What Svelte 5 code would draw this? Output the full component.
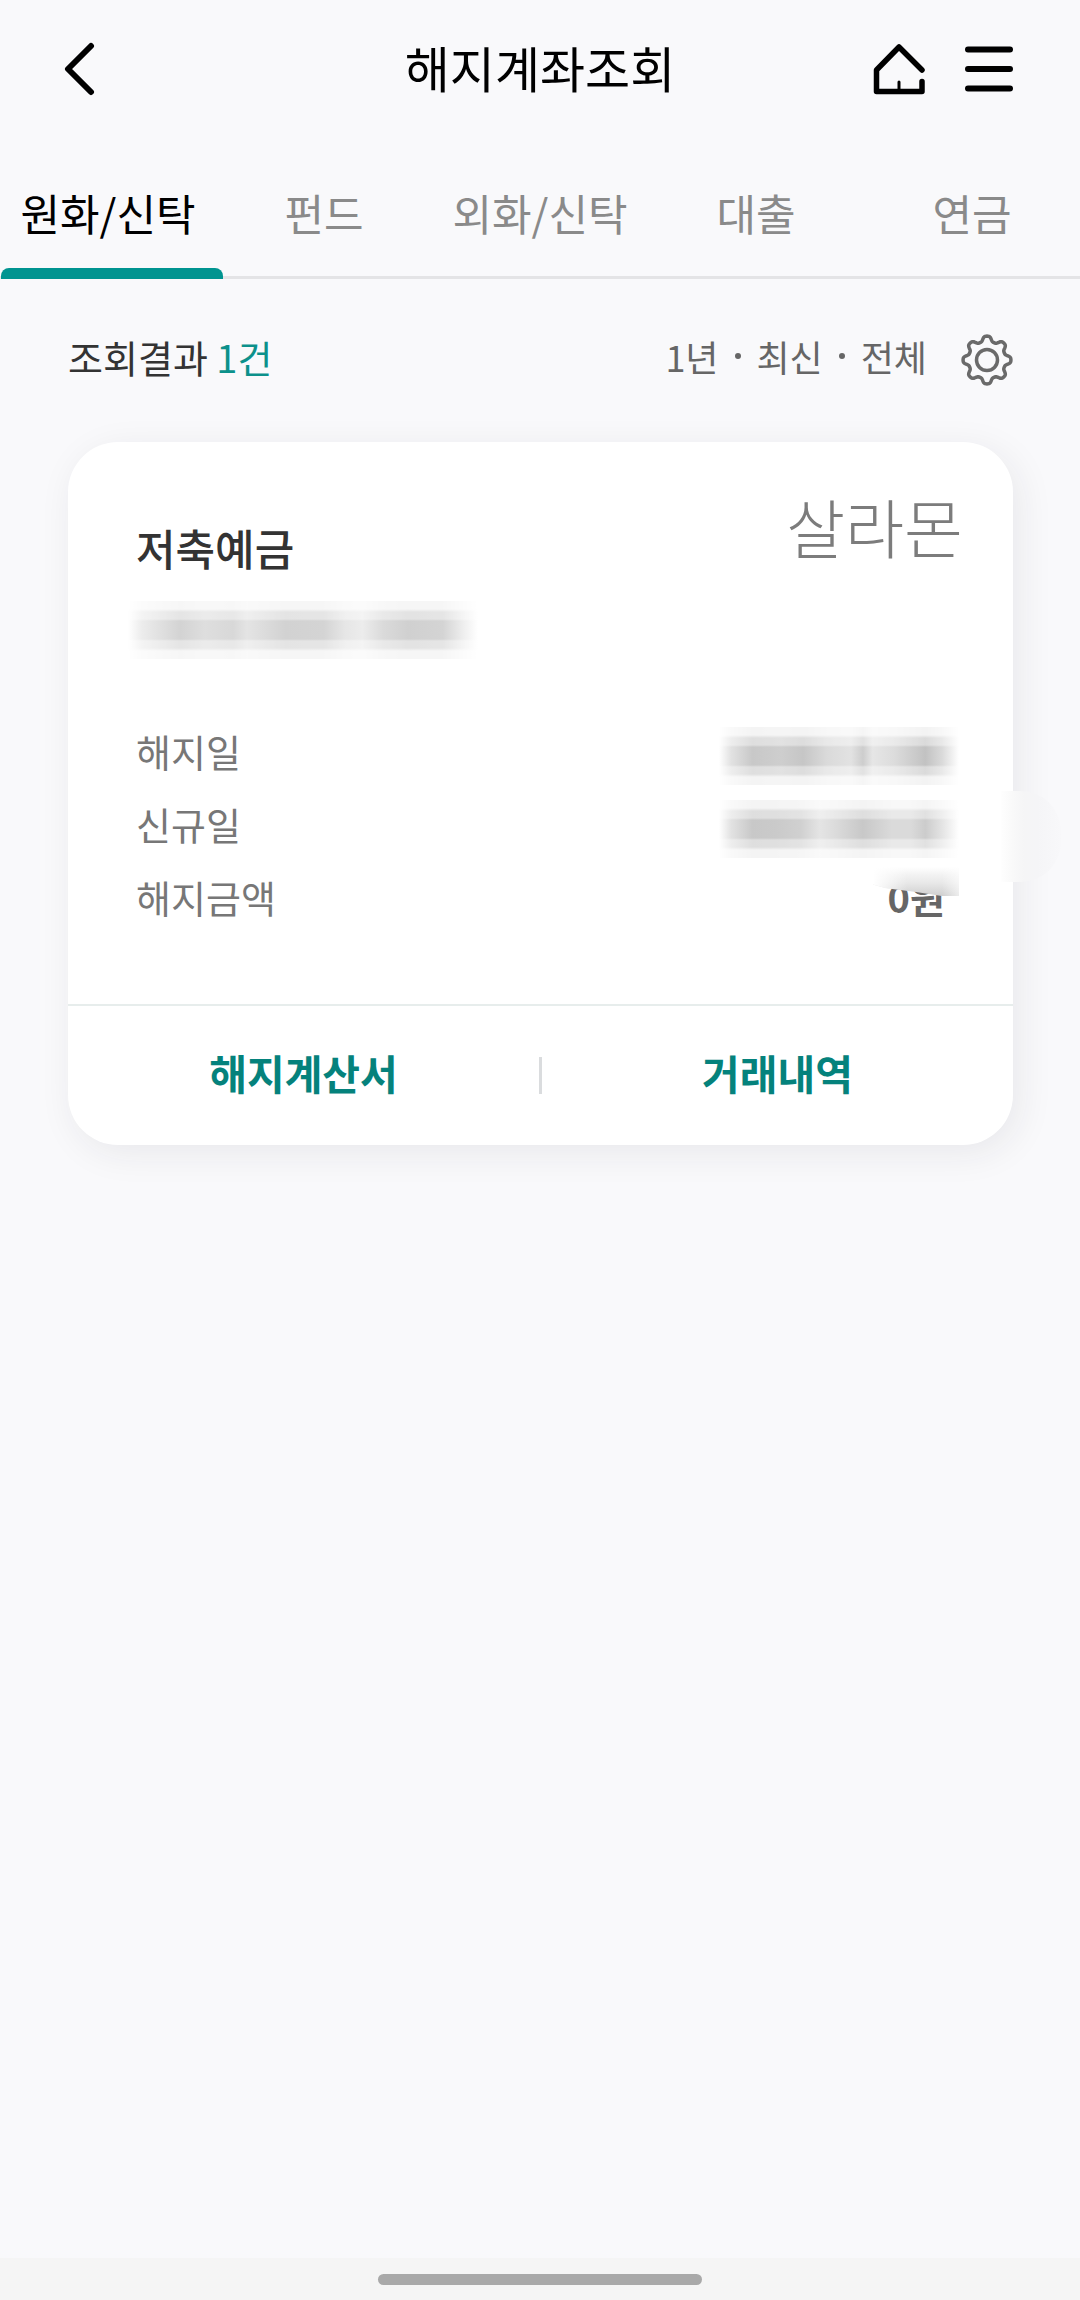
<script lang="ts">
  interface Account {
    name: string;
    owner: string;
    amount: string;
  }

  const tabs = ['원화/신탁', '펀드', '외화/신탁', '대출', '연금'];
  const filters = ['1년', '최신', '전체'];
  const accounts: Account[] = [{ name: '저축예금', owner: '살라몬', amount: '0원' }];

  let activeTab = $state('원화/신탁');

  // eight rounded teeth around the centre of a 52x52 box
  function gearOutline() {
    const points: string[] = [];
    for (let i = 0; i < 160; i++) {
      const angle = (i / 160) * Math.PI * 2;
      const r = 21.3 + 2.9 * Math.tanh(1.5 * Math.cos(angle * 8));
      points.push(`${(26 + r * Math.sin(angle)).toFixed(2)} ${(26 - r * Math.cos(angle)).toFixed(2)}`);
    }
    return `M${points.join('L')}Z`;
  }
</script>

<div class="page">
  <header class="topbar">
    <button class="icon-btn" aria-label="뒤로">
      <svg width="32" height="56" viewBox="0 0 32 56" fill="none">
        <path d="M27 5 4 28 27 51" stroke="#000" stroke-width="6" stroke-linecap="round" stroke-linejoin="round" />
      </svg>
    </button>
    <h1 class="title">해지계좌조회</h1>
    <div class="topbar-actions">
      <button class="icon-btn" aria-label="홈">
        <svg width="52" height="52" viewBox="0 0 52 52" fill="none" stroke="#000" stroke-linecap="round" stroke-linejoin="round">
          <path d="M49 27 26 4 3.500 27V48.500H49V38.500" stroke-width="5.500" />
          <path d="M26 39V48" stroke-width="3" />
        </svg>
      </button>
      <button class="icon-btn" aria-label="메뉴">
        <svg width="48" height="52" viewBox="0 0 48 52" fill="none">
          <path d="M3 6.500H45M3 26H45M3 45.500H45" stroke="#000" stroke-width="6" stroke-linecap="round" />
        </svg>
      </button>
    </div>
  </header>

  <nav class="tabs">
    {#each tabs as tab}
      <button class="tab" class:active={tab === activeTab} onclick={() => (activeTab = tab)}>{tab}</button>
    {/each}
  </nav>

  <main class="content">
    <div class="summary">
      <p class="count">조회결과 <span class="count-value">{accounts.length}건</span></p>
      <div class="summary-right">
        <div class="filters">
          {#each filters as filter, i}
            {#if i > 0}<span class="dot"></span>{/if}
            <span>{filter}</span>
          {/each}
        </div>
        <button class="icon-btn" aria-label="조회 설정">
          <svg width="52" height="52" viewBox="0 0 52 52" fill="none" stroke="#6a6a6a" stroke-width="3.500" stroke-linejoin="round">
            <path d={gearOutline()} />
            <circle cx="26" cy="26" r="10.500" />
          </svg>
        </button>
      </div>
    </div>

    {#each accounts as account}
      <article class="card">
        <div class="card-head">
          <div>
            <h2 class="account-name">{account.name}</h2>
            <div class="smudge smudge-number"></div>
          </div>
          <span class="owner">{account.owner}</span>
        </div>
        <dl class="details">
          <div class="row">
            <dt>해지일</dt>
            <dd><div class="smudge smudge-closed"></div></dd>
          </div>
          <div class="row">
            <dt>신규일</dt>
            <dd><div class="smudge smudge-opened"></div></dd>
          </div>
          <div class="row">
            <dt>해지금액</dt>
            <dd class="amount">{account.amount}<span class="amount-cover"></span></dd>
          </div>
        </dl>
        <div class="card-actions">
          <button class="action">해지계산서</button>
          <span class="separator"></span>
          <button class="action">거래내역</button>
        </div>
        <span class="edge-smear"></span>
      </article>
    {/each}
  </main>

  <footer class="gesture-bar"><span class="gesture-pill"></span></footer>
</div>

<style>
:global(body) {
  background: #f9f9fb;
}
.page {
  display: flex;
  flex-direction: column;
  min-height: 100vh;
  background: #f9f9fb;
  color: #333;
  font-family: "Noto Sans CJK KR", sans-serif;
  font-size: 38px;
}
button {
  margin: 0;
  padding: 0;
  border: none;
  background: none;
  color: inherit;
  font: inherit;
  cursor: pointer;
}
h1, h2, p, dl, dd {
  margin: 0;
}
svg {
  display: block;
}
.topbar {
  display: grid;
  grid-template-columns: 1fr auto 1fr;
  align-items: center;
  height: 138px;
  padding: 0 67px;
}
.topbar > .icon-btn {
  margin-left: -3px;
}
.icon-btn {
  justify-self: start;
}
.title {
  padding-bottom: 4px;
  color: #000;
  font-size: 49px;
  font-weight: 400;
  line-height: 72px;
}
.topbar-actions {
  display: flex;
  justify-content: flex-end;
  gap: 40px;
}
.tabs {
  display: flex;
  height: 138px;
  border-bottom: 3px solid #e4e4e6;
}
.tab {
  position: relative;
  flex: 1;
  padding-top: 10px;
  color: #8a8a8a;
  font-size: 43px;
  line-height: 64px;
  white-space: nowrap;
}
.tab.active {
  color: #000;
}
.tab.active::after {
  content: "";
  position: absolute;
  left: 1px;
  right: -7px;
  bottom: -3px;
  height: 11px;
  border-radius: 8px 8px 0 0;
  background: #009490;
}
.content {
  padding: 51px 67px 60px 68px;
}
.summary {
  display: flex;
  align-items: center;
  justify-content: space-between;
  height: 60px;
}
.count {
  padding-bottom: 8px;
}
.count-value {
  color: #0c918b;
}
.summary-right {
  display: flex;
  align-items: center;
  gap: 34px;
}
.filters {
  display: flex;
  align-items: center;
  gap: 16px;
  padding-bottom: 8px;
  color: #666;
  font-size: 36px;
}
.dot {
  width: 6px;
  height: 6px;
  border-radius: 50%;
  background: #666;
}
.card {
  position: relative;
  margin-top: 52px;
  border-radius: 50px;
  background: #fff;
  box-shadow: 6px 8px 36px rgba(40, 40, 50, 0.08);
}
.card-head {
  display: flex;
  justify-content: space-between;
  align-items: flex-start;
  padding: 39px 50px 0 68px;
}
.account-name {
  margin-top: 34px;
  font-size: 43px;
  font-weight: 500;
  line-height: 64px;
}
.owner {
  color: #7c7c7c;
  font-size: 64px;
  font-weight: 300;
  line-height: 88px;
}
/* blurred private values */
.smudge {
  width: 240px;
  height: 58px;
  -webkit-mask-image: linear-gradient(rgba(0, 0, 0, 0.2) 8px, rgba(0, 0, 0, 0.6) 11px 18px, #000 20px 38px, rgba(0, 0, 0, 0.6) 40px 47px, rgba(0, 0, 0, 0.2) 50px);
  mask-image: linear-gradient(rgba(0, 0, 0, 0.2) 8px, rgba(0, 0, 0, 0.6) 11px 18px, #000 20px 38px, rgba(0, 0, 0, 0.6) 40px 47px, rgba(0, 0, 0, 0.2) 50px);
}
.row .smudge {
  margin-top: 10px;
}
.smudge-number {
  width: 350px;
  margin-top: 22px;
  margin-left: -8px;
  background: linear-gradient(90deg, #fff, #ececec 4%, #d3d3d3 15%, #dedede 22%, #d8d8d8 30%, #e4e4e4 34%, #d2d2d2 45%, #d4d4d4 56%, #e6e6e6 62%, #ececec 67%, #dadada 73%, #d0d0d0 80%, #d4d4d4 90%, #efefef 96%, #fff);
}
.smudge-closed {
  background: linear-gradient(90deg, #fff, #e2e2e2 5%, #c8c8c8 14%, #cecece 26%, #c6c6c6 35%, #dadada 45%, #e2e2e2 55%, #cdcdcd 60%, #e6e6e6 64%, #dcdcdc 73%, #c2c2c2 86%, #dadada 93%, #fff);
}
.smudge-opened {
  background: linear-gradient(90deg, #fff, #e2e2e2 5%, #c8c8c8 14%, #cacaca 24%, #d0d0d0 34%, #e4e4e4 42%, #dcdcdc 48%, #c8c8c8 60%, #dadada 72%, #dadada 80%, #cccccc 86%, #e4e4e4 93%, #fff);
}
.details {
  padding: 55px 54px 0 68px;
}
.row {
  display: flex;
  justify-content: space-between;
  align-items: center;
  height: 73px;
  color: #777;
}
.amount {
  position: relative;
  padding-right: 14px;
  color: #666;
  font-weight: 700;
}
.amount-cover {
  position: absolute;
  top: -2px;
  right: 0;
  width: 86px;
  height: 29px;
  background: linear-gradient(90deg, #fff, transparent 40%, transparent 80%, rgba(255, 255, 255, 0.6)), linear-gradient(#fff, #f2f2f2 8px, #e8e8e8 16px, #cfcfcf);
  clip-path: polygon(0 0, 100% 0, 100% 100%, 80% 100%, 50% 86%, 14% 72%, 0 60%);
}
.card-actions {
  display: flex;
  align-items: center;
  margin-top: 71px;
  border-top: 2px solid #e7edec;
}
.action {
  flex: 1;
  height: 139px;
  padding-bottom: 8px;
  color: #05827c;
  font-size: 41px;
  font-weight: 700;
}
.separator {
  width: 3px;
  height: 37px;
  background: #dadcde;
}
.edge-smear {
  position: absolute;
  top: 349px;
  right: -48px;
  width: 60px;
  height: 91px;
  border-radius: 0 40px 40px 0;
  background: linear-gradient(90deg, #fefefe, #f9f9f9 20%, #f5f5f6 38%, #f5f5f7 60%, #f8f8fa);
}
.gesture-bar {
  display: flex;
  align-items: center;
  justify-content: center;
  height: 42px;
  margin-top: auto;
  background: #f5f5f5;
}
.gesture-pill {
  width: 30%;
  height: 11px;
  border-radius: 6px;
  background: #a9a9a9;
}
</style>
